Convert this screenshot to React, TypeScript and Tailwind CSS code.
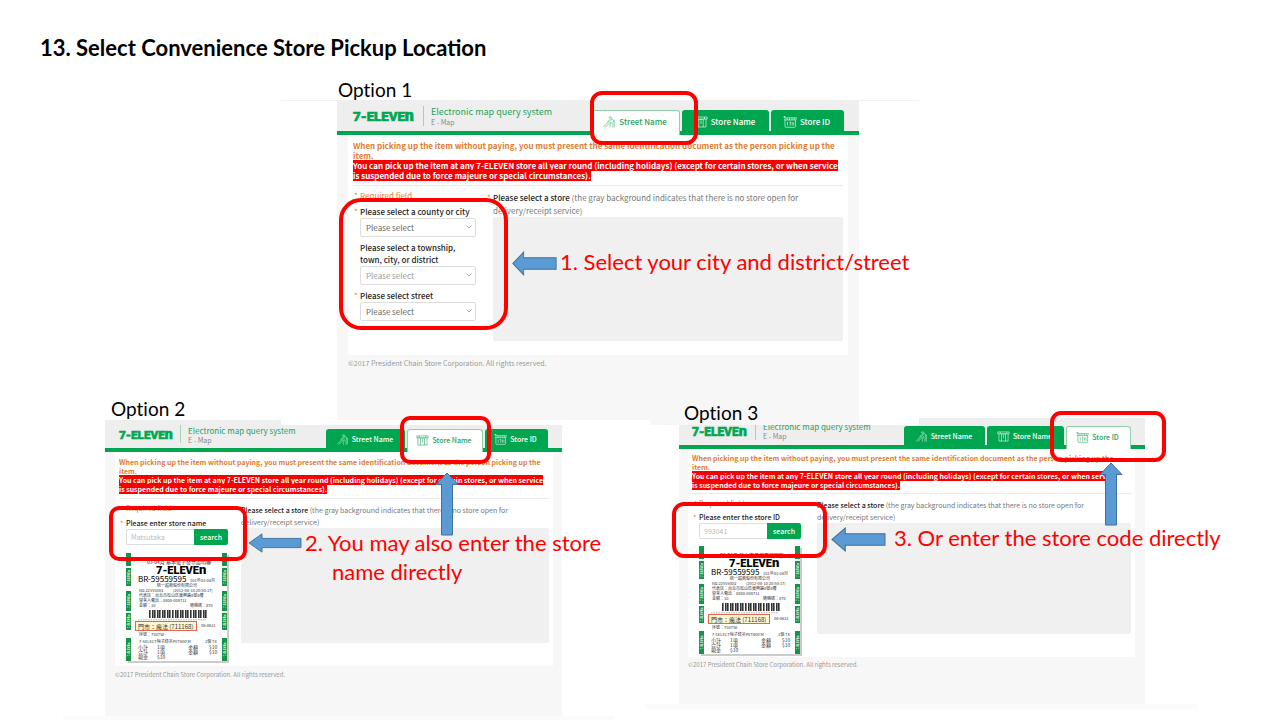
import type { ReactNode } from "react";

type Mode = "street" | "name" | "id";

const pageFont = "font-['Noto_Sans_CJK_TC',sans-serif]";

interface Sizing {
  header: string;
  logo: string;
  divider: string;
  brand: string;
  title: string;
  tabs: string;
  tabText: string;
  tabIcon: string;
  tabWidth: Record<Mode, string>;
  panel: string;
  notice: string;
  hint: string;
  area: string;
  footer: string;
}

const sizing: Record<Mode, Sizing> = {
  street: {
    header: "h-[35px] pl-4 pr-[15px]",
    logo: "w-[61px] h-[13px] mt-[9px]",
    divider: "ml-[9px] mt-[6px] h-5",
    brand: "mt-[6px]",
    title: "text-[9px] leading-3",
    tabs: "h-[25px]",
    tabText: "text-[8px]",
    tabIcon: "w-[14px] h-[12px]",
    tabWidth: { street: "w-[89px]", name: "w-[87px]", id: "w-[73px]" },
    panel: "mx-[11px] px-[5px] pt-[6px] pb-[14px]",
    notice: "text-[8px] leading-[10px] pb-1 mb-[5px]",
    hint: "text-[8px] leading-[13px]",
    area: "h-[124px]",
    footer: "ml-[11px] pt-[3px] pb-[52px] text-[7px] leading-[10px]",
  },
  name: {
    header: "h-8 pl-[14px] pr-[14px]",
    logo: "w-[54px] h-[12px] mt-[8px]",
    divider: "ml-[7px] mt-[5px] h-[18px]",
    brand: "mt-[6px]",
    title: "text-[8px] leading-[10px]",
    tabs: "h-[23px]",
    tabText: "text-[7px]",
    tabIcon: "w-[13px] h-[11px]",
    tabWidth: { street: "w-[79px]", name: "w-[76px]", id: "w-[63px]" },
    panel: "ml-[10px] mr-[9px] px-1 pt-[6px] pb-[23px]",
    notice: "text-[7px] leading-[9px] pb-1 mb-[5px]",
    hint: "text-[7px] leading-[12px]",
    area: "h-[115px]",
    footer: "ml-[10px] pt-1 pb-9 text-[6px] leading-[10px]",
  },
  id: {
    header: "h-[31px] pl-[13px] pr-[14px]",
    logo: "w-[55px] h-[12px] mt-[7px]",
    divider: "ml-[8px] mt-[4px] h-[18px]",
    brand: "mt-1",
    title: "text-[8px] leading-[10px]",
    tabs: "h-[23px]",
    tabText: "text-[7px]",
    tabIcon: "w-[13px] h-[11px]",
    tabWidth: { street: "w-[81px]", name: "w-[77px]", id: "w-[65px]" },
    panel: "ml-[9px] mr-[10px] px-1 pt-[5px] pb-[23px]",
    notice: "text-[7px] leading-[9px] pb-[3px] mb-[5px]",
    hint: "text-[7px] leading-[12px]",
    area: "h-[111px]",
    footer: "ml-[9px] pt-[3px] pb-[34px] text-[6px] leading-[10px]",
  },
};

function Logo({ className }: { className: string }) {
  return (
    <svg viewBox="0 0 69 14" className={`overflow-visible ${className}`} role="img" aria-label="7-ELEVEn">
      <text x="0" y="13" fontFamily="Roboto, sans-serif" fontWeight="900" fontSize="15" fill="#00a650" stroke="#00a650" strokeWidth="0.7">
        7-ELEVE<tspan fontSize="18">n</tspan>
      </text>
    </svg>
  );
}

function StreetIcon({ className }: { className: string }) {
  return (
    <svg viewBox="0 0 14 12" className={className} fill="none" stroke="currentColor" strokeWidth="0.5" strokeLinecap="round">
      <path d="M6.500 1.800C7.500.2 9.800.6 9.600 2.400 9.500 4 8 4.500 6.800 5.800 5.500 7.200 4 7.800 1.600 10.800" />
      <path d="M8.300 2c.2 1.600-2 2.600-3 4.200M3.200 11.200C4.800 9.200 7.300 8 8.400 6.300 9 5.400 9.300 6.500 8.800 7.400 8.300 8.500 7.600 9.500 8 11.200" />
      <path d="M10.400 3.200c1.500.6 1.200 2.200.6 3.400-.6 1.300.4 2.400-.2 4.500M11.900 4c1.300 1.300.5 2.600.3 3.800-.2 1.200.5 2 .1 3.300" />
    </svg>
  );
}

function StoreIcon({ className }: { className: string }) {
  return (
    <svg viewBox="0 0 14 12" className={className} fill="none" stroke="currentColor" strokeWidth="0.6">
      <path d="M.8 1h12.400v2H.8zM2 3v8h10V3M4.800 3v8M9.200 3v8M7 4.500V8M3.500 1v2M10.500 1v2M5.500 3.500h3" />
    </svg>
  );
}

function IdIcon({ className }: { className: string }) {
  return (
    <svg viewBox="0 0 14 12" className={className} fill="none" stroke="currentColor" strokeWidth="0.6">
      <path d="M.3.8h2.400M1.500.1v1.700M2.500 1.800h11L12.800 4H1.500zM2 4v6.500c0 .5.300.8.800.8h9c.5 0 .8-.3.800-.8V4" />
      <path d="M4.500 6v3.500M6.200 6h1.400L7 9.500M9.200 6v3.500M10.800 6v3.500M4.200 2v2M6.500 2v2M9 2v2M11.200 2v2" />
    </svg>
  );
}

const ring = "absolute z-20 border-4 border-[#ff0000] pointer-events-none";

function ArrowLeft({ className }: { className: string }) {
  return (
    <svg viewBox="0 0 54 24" preserveAspectRatio="none" className={className} aria-hidden="true">
      <path d="M1 12 14 1v5.500h39v11H14V23z" fill="#5b9bd5" stroke="#41719c" strokeWidth="1" />
    </svg>
  );
}

function ArrowUp() {
  return (
    <svg viewBox="0 0 24 64" className="h-16 w-6" aria-hidden="true">
      <path d="M12 1 23 12.500h-5.500V63h-11V12.500H1z" fill="#5b9bd5" stroke="#41719c" strokeWidth="1" />
    </svg>
  );
}

const tabList: { key: Mode; label: string; Icon: (p: { className: string }) => ReactNode }[] = [
  { key: "street", label: "Street Name", Icon: StreetIcon },
  { key: "name", label: "Store Name", Icon: StoreIcon },
  { key: "id", label: "Store ID", Icon: IdIcon },
];

const tabRing: Record<Mode, string> = {
  street: "-top-[19px] -bottom-[10px] -left-px -right-[18px] rounded-[12px]",
  name: "-top-[13px] -bottom-[12px] -left-[7px] -right-[8px] rounded-[10px]",
  id: "-top-[15px] -bottom-[13px] -left-[16px] -right-[35px] rounded-[11px]",
};

const tabArrow: Record<Mode, string> = {
  street: "hidden",
  name: "top-[43px] left-[28px]",
  id: "top-[36px] left-[33px]",
};

function Header({ mode }: { mode: Mode }) {
  const s = sizing[mode];
  return (
    <header className={`flex border-b-4 border-[#00a64f] bg-[#eeeeee] ${s.header}`}>
      <Logo className={`shrink-0 ${s.logo}`} />
      <div className={`w-px shrink-0 bg-[#9fd4b4] ${s.divider}`} />
      <div className={`ml-[7px] whitespace-nowrap ${s.brand}`}>
        <div className={`text-[#1ea35a] ${s.title}`}>Electronic map query system</div>
        <div className="text-[7px] leading-2 text-[#888888]">E - Map</div>
      </div>
      <nav className="-mb-1 ml-auto flex items-end gap-[2px]">
        {tabList.map(({ key, label, Icon }) => {
          const active = key === mode;
          return (
            <div key={key} className={`relative ${s.tabs} ${s.tabWidth[key]}`}>
              <button
                type="button"
                className={`flex h-full w-full items-center justify-center gap-[3px] whitespace-nowrap rounded-t-[3px] pb-[2px] pr-[2px] font-medium ${s.tabText} ${
                  active ? "border border-b-0 border-[#8fd0a9] bg-white text-[#1ea35a]" : "bg-[#00a64f] text-white"
                }`}
              >
                <Icon className={`shrink-0 ${s.tabIcon}`} />
                {label}
              </button>
              {active && (
                <>
                  <div className={`${ring} ${tabRing[key]}`} />
                  <div className={`absolute z-20 ${tabArrow[key]}`}>
                    <ArrowUp />
                  </div>
                </>
              )}
            </div>
          );
        })}
      </nav>
    </header>
  );
}

function Label({ id, required, children }: { id: string; required?: boolean; children: ReactNode }) {
  return (
    <div className="relative">
      {required && <span className="absolute -left-[6px] top-0 text-[#e08030]">*</span>}
      <label htmlFor={id} className="block whitespace-nowrap font-medium text-[#222222]">
        {children}
      </label>
    </div>
  );
}

function Select({ id, muted }: { id: string; muted?: boolean }) {
  return (
    <div className="relative w-[116px]">
      <select
        id={id}
        className={`block h-[19px] w-full appearance-none rounded-[2px] border border-[#dddddd] bg-white pl-[5px] text-[8px] leading-[14px] ${
          muted ? "text-[#999999]" : "text-[#666666]"
        }`}
      >
        <option>Please select</option>
      </select>
      <svg viewBox="0 0 6 4" className="pointer-events-none absolute right-[4px] top-[7px] h-1 w-[6px]" fill="none" stroke="#999999" strokeWidth="0.8">
        <path d="M.5.5 3 3 5.500.5" />
      </svg>
    </div>
  );
}

function StreetForm() {
  return (
    <div className="relative w-[140px] shrink-0 pl-[7px] text-[8px] leading-3">
      <div className="relative mb-[5px] leading-[10px] text-[#e08030]">
        <span className="absolute -left-[6px]">*</span>Required field
      </div>
      <Label id="county" required>
        Please select a county or city
      </Label>
      <Select id="county" />
      <div className="h-[5px]" />
      <Label id="town">
        Please select a township,
        <br />
        town, city, or district
      </Label>
      <Select id="town" muted />
      <div className="h-[5px]" />
      <Label id="street" required>
        Please select street
      </Label>
      <Select id="street" />
      <div className={`${ring} -left-[14px] top-[7px] h-[132px] w-[169px] rounded-[22px]`}>
        <div className="absolute left-full top-[45px] ml-[8px] flex items-start">
          <ArrowLeft className="mt-[4px] h-[25px] w-[45px]" />
          <Callout className="ml-[3px]">1. Select your city and district/street</Callout>
        </div>
      </div>
    </div>
  );
}

function Callout({ className = "", children }: { className?: string; children: ReactNode }) {
  return (
    <p className={`whitespace-nowrap font-[Lato,sans-serif] text-[22px] leading-[29px] text-[#ff0000] [font-variant-ligatures:none] ${className}`}>
      {children}
    </p>
  );
}

const stripes = [
  { top: 0, height: 13 },
  { top: 15, height: 18 },
  { top: 38, height: 20 },
  { top: 60, height: 17 },
  { top: 85, height: 23 },
];

const bars = [0, 3, 5, 8, 10, 13, 15, 18, 20, 23, 26, 28, 31, 33, 36, 38, 41, 44, 46, 49, 51, 54, 56];

function Receipt() {
  return (
    <svg viewBox="0 0 103 110" className="h-[110px] w-[103px]" fontFamily="'Noto Sans CJK TC', sans-serif" fontSize="4" fill="#333333">
      <rect x="2" y="2" width="101" height="108" fill="#cccccc" />
      <rect x="0" y="0" width="101" height="108" fill="#ffffff" />
      {[0, 96].map((x) =>
        stripes.map(({ top, height }) => (
          <g key={`${x}-${top}`}>
            <rect x={x} y={top} width="5" height={height} fill="#159447" />
            {height > 16 && (
              <text transform={`translate(${x + 4} ${top + height / 2}) rotate(-90)`} textAnchor="middle" fontSize="3" fontWeight="700" fill="#ffffff">
                7-ELEVEn
              </text>
            )}
          </g>
        )),
      )}
      <text x="21" y="11" fontSize="5">03-04月 基本電子發票證明聯</text>
      <text x="30" y="21" fontSize="11" fontWeight="900" fontFamily="Roboto, sans-serif" fill="#000000">
        7-ELEVE<tspan fontSize="13">n</tspan>
      </text>
      <text x="12" y="29" fontSize="8" fill="#000000">BR-59559595</text>
      <text x="64" y="29">101年03-04月</text>
      <text x="31" y="34">統一超商股份有限公司</text>
      <text x="13" y="39">No.22555003</text>
      <text x="47" y="39">(2012-04-10 20:50:17)</text>
      <text x="13" y="44">代表店：台北市松山區東興路8號8樓</text>
      <text x="13" y="49">營業人電話：0800-008711</text>
      <text x="13" y="54">金額：10</text>
      <text x="64" y="54">隨機碼：870</text>
      {bars.map((b) => (
        <rect key={b} x={23 + b} y="57" width="1.600" height="8" />
      ))}
      <path d="M12 66.800h68" stroke="#777777" strokeWidth="0.6" strokeDasharray="1.500 1" />
      <rect x="9.500" y="68.500" width="61" height="9" fill="#fff6cf" stroke="#dc6850" />
      <text x="12" y="75.500" fontSize="6">門市：魔法 (711168)</text>
      <text x="75" y="74">06-0631</text>
      <text x="13" y="83">序號：750750</text>
      <text x="13" y="90">7-SELECT梅子綠茶PET600 M</text>
      <text x="79" y="90">1個 TX</text>
      <g fontSize="5">
        <text x="12" y="96">小計</text>
        <text x="31" y="96">1項</text>
        <text x="62" y="96">金額</text>
        <text x="83" y="96">$10</text>
        <text x="12" y="101">合計</text>
        <text x="31" y="101">1項</text>
        <text x="62" y="101">金額</text>
        <text x="83" y="101">$10</text>
        <text x="12" y="106">現金</text>
        <text x="31" y="106">$10</text>
      </g>
    </svg>
  );
}

interface SearchFormProps {
  id: string;
  label: string;
  placeholder: string;
  ringClass: string;
  calloutClass: string;
  rowClass: string;
  children: ReactNode;
}

function SearchForm({ id, label, placeholder, ringClass, calloutClass, rowClass, children }: SearchFormProps) {
  return (
    <div className="relative shrink-0 pl-[7px] text-[7px] leading-[11px]">
      <div className="relative leading-[9px] text-[#e08030]">
        <span className="absolute -left-[5px]">*</span>Required field
      </div>
      <div className={rowClass}>
        <Label id={id} required>
          {label}
        </Label>
        <div className="flex h-4">
          <input
            id={id}
            placeholder={placeholder}
            className="w-[68px] rounded-l-[2px] border border-r-0 border-[#dddddd] bg-white pl-1 text-[7px] placeholder:text-[#bbbbbb]"
          />
          <button type="button" className="w-[34px] rounded-r-[2px] bg-[#00a64f] font-medium text-white">
            search
          </button>
        </div>
      </div>
      <div className="absolute left-[7px] top-full">
        <Receipt />
      </div>
      <div className={`${ring} ${ringClass}`}>
        <div className={`absolute left-full flex items-start ${calloutClass}`}>{children}</div>
      </div>
    </div>
  );
}

const forms: Record<Mode, ReactNode> = {
  street: <StreetForm />,
  name: (
    <SearchForm
      id="store-name"
      label="Please enter store name"
      placeholder="Matsutaka"
      rowClass="mt-[5px] h-[35px]"
      ringClass="-left-[10px] top-[2px] h-[55px] w-[138px] rounded-[10px]"
      calloutClass="top-[18px] ml-[5px]"
    >
      <ArrowLeft className="mt-[5px] h-5 w-[54px]" />
      <Callout className="ml-[3px]">
        2. You may also enter the store
        <br />
        <span className="pl-[27px]">name directly</span>
      </Callout>
    </SearchForm>
  ),
  id: (
    <SearchForm
      id="store-id"
      label="Please enter the store ID"
      placeholder="993041"
      rowClass="mt-1 h-[34px]"
      ringClass="-left-[20px] top-[3px] h-[56px] w-[155px] rounded-[12px]"
      calloutClass="top-[17px] ml-[8px]"
    >
      <ArrowLeft className="mt-[4px] h-[25px] w-[55px]" />
      <Callout className="ml-2">3. Or enter the store code directly</Callout>
    </SearchForm>
  ),
};

const formColumn: Record<Mode, string> = {
  street: "w-[140px]",
  name: "w-[122px]",
  id: "w-[125px]",
};

function EMap({ mode }: { mode: Mode }) {
  const s = sizing[mode];
  return (
    <div className={`bg-[#f7f7f7] ${pageFont}`}>
      <Header mode={mode} />
      <div className={`bg-white ${s.panel}`}>
        <p className={`whitespace-nowrap border-b border-[#eaeaea] font-bold text-[#df7c33] ${s.notice}`}>
          When picking up the item without paying, you must present the same identification document as the person picking up the
          <br />
          item.
          <br />
          <span className="bg-[#f80000] text-white">
            You can pick up the item at any 7-ELEVEN store all year round (including holidays) (except for certain stores, or when service
            <br />
            is suspended due to force majeure or special circumstances).
          </span>
        </p>
        <div className="flex items-start">
          <div className={`shrink-0 ${formColumn[mode]}`}>{forms[mode]}</div>
          <div className="min-w-0 flex-1">
            <p className={`relative whitespace-nowrap text-[#777777] ${s.hint}`}>
              <span className="absolute -left-[6px] text-[#e08030]">*</span>
              <span className="font-medium text-[#222222]">Please select a store</span> (the gray background indicates that there is no store open for
              <br />
              delivery/receipt service)
            </p>
            <div className={`rounded-[2px] bg-[#f0f0f0] ${s.area}`} />
          </div>
        </div>
      </div>
      <footer className={`text-[#999999] ${s.footer}`}>©2017 President Chain Store Corporation. All rights reserved.</footer>
    </div>
  );
}

function Caption({ className = "", children }: { className?: string; children: ReactNode }) {
  return (
    <figcaption className={`relative z-20 font-[Lato,sans-serif] text-[19px] leading-5 text-black [font-variant-ligatures:none] ${className}`}>
      {children}
    </figcaption>
  );
}

export default function App() {
  return (
    <main className="min-h-screen overflow-hidden bg-white">
      <h1 className="pl-10 pt-[35px] font-[Lato,sans-serif] text-[22px] font-bold leading-[26px] text-black">
        13. Select Convenience Store Pickup Location
      </h1>
      <div className="grid grid-cols-[minmax(0,281fr)_minmax(0,638fr)_minmax(0,361fr)] pt-[19px]">
        <figure className="relative z-10 col-start-2">
          <Caption className="pl-[57px]">Option 1</Caption>
          <div className="border-t border-[#f2f2f2] bg-white pl-14 pr-[60px]">
            <div className="-mt-px">
              <EMap mode="street" />
              <div className="h-[5px] bg-[linear-gradient(90deg,#ffffff_60%,#f7f7f7_60%)]" />
            </div>
          </div>
        </figure>
      </div>
      <div className="-mt-[26px] grid grid-cols-[minmax(0,105fr)_minmax(0,457fr)_minmax(0,117fr)_minmax(0,466fr)_minmax(0,135fr)] items-start">
        <figure className="col-start-2">
          <Caption className="pl-[6px]">Option 2</Caption>
          <div className="mt-px">
            <EMap mode="name" />
            <div className="-ml-[42px] -mr-[52px] h-[5px] bg-[#fbfbfb]" />
          </div>
        </figure>
        <figure className="col-start-4 pt-1">
          <Caption className="pl-[5px]">Option 3</Caption>
          <div className="-mt-[5px]">
            <EMap mode="id" />
            <div className="-ml-[34px] -mr-[52px] h-[5px] bg-[#fbfbfb]" />
          </div>
        </figure>
      </div>
    </main>
  );
}
